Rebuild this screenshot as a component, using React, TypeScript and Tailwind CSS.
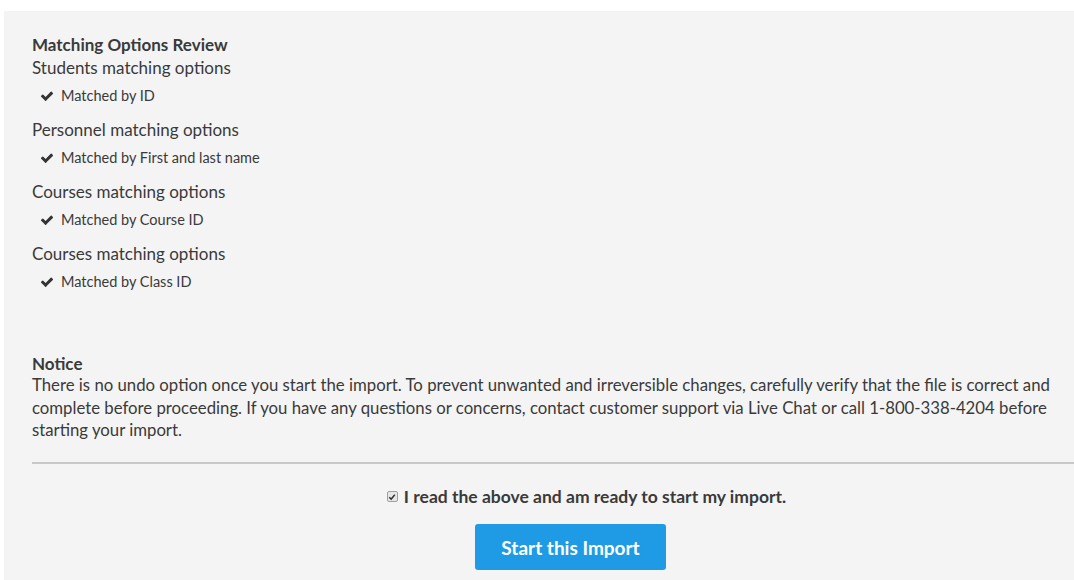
import React from "react";

const Check = () => (
  <svg viewBox="0 0 1792 1792" className="w-[14px] h-[14px] shrink-0" fill="#333">
    <path d="M1671 566q0 40-28 68l-724 724-136 136q-28 28-68 28t-68-28l-136-136-362-362q-28-28-28-68t28-68l136-136q28-28 68-28t68 28l294 295 656-657q28-28 68-28t68 28l136 136q28 28 28 68z" />
  </svg>
);

const sections = [
  { title: "Students matching options", item: "Matched by ID" },
  { title: "Personnel matching options", item: "Matched by First and last name" },
  { title: "Courses matching options", item: "Matched by Course ID" },
  { title: "Courses matching options", item: "Matched by Class ID" },
];

export default function App() {
  return (
    <div
      className="w-[1074px] h-[580px] bg-white pt-[11px] pl-[4px] overflow-hidden text-[#3a3a3a]"
      style={{ fontFamily: "Lato, 'Noto Sans', sans-serif" }}
    >
      <div className="bg-[#f4f4f4] h-full pl-[28px] pt-[23px]">
        <div className="text-[17px] leading-[22px] font-bold">Matching Options Review</div>
        {sections.map((s, i) => (
          <div key={i} className="pb-[12px]">
            <div className="text-[17px] leading-[24px]">{s.title}</div>
            <div className="mt-[6px] flex items-center h-[20px] pl-[8px] gap-[7px] text-[14.5px]">
              <Check />
              <span>{s.item}</span>
            </div>
          </div>
        ))}
        <div className="mt-[49px] text-[17px] leading-[21px] font-bold">Notice</div>
        <p className="text-[16.75px] leading-[22.5px]">
          There is no undo option once you start the import. To prevent unwanted and irreversible changes, carefully verify that the file is correct and complete before proceeding. If you have any questions or concerns, contact customer support via Live Chat or call 1-800-338-4204 before starting your import.
        </p>
        <div className="mt-[20px] h-[2px] bg-[#c8c8c8]" />
        <div className="flex flex-col items-center pl-[35px]">
          <label className="mt-[22px] ml-[32px] flex items-center gap-[6px] text-[17.5px] leading-[22px] font-bold">
            <span className="w-[11px] h-[11px] rounded-[2px] border border-[#a0a0a0] bg-[#e6e6e6] flex items-center justify-center">
              <svg viewBox="0 0 10 10" className="w-[8px] h-[8px]">
                <path d="M1.5 5.2 L4 7.6 L8.5 2.2" stroke="#333" strokeWidth="1.8" fill="none" />
              </svg>
            </span>
            <span>I read the above and am ready to start my import.</span>
          </label>
          <button className="mt-[16px] w-[191px] h-[46px] pt-[4px] rounded-[3px] bg-[#1f9be6] text-white text-[19px] font-bold">
            Start this Import
          </button>
        </div>
      </div>
    </div>
  );
}
